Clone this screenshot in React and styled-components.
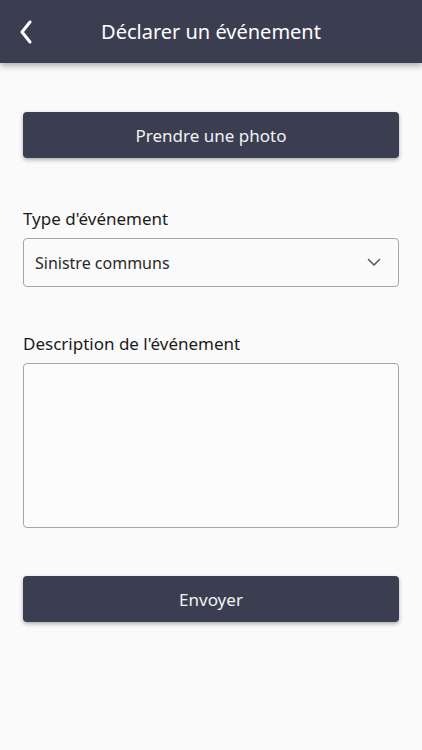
import styled, { createGlobalStyle } from "styled-components";

const GlobalStyle = createGlobalStyle`
  html, body {
    margin: 0;
    padding: 0;
    background: #fafafa;
  }
  body {
    font-family: "Noto Sans", "Open Sans", sans-serif;
    color: #222;
  }
`;

const Page = styled.div`
  width: 422px;
  min-height: 750px;
  background: #fafafa;
`;

const Header = styled.header`
  height: 63px;
  background: #3b3e51;
  display: flex;
  align-items: center;
  position: relative;
  box-shadow: 0 3px 6px rgba(0, 0, 0, 0.3);
`;

const BackButton = styled.button`
  position: absolute;
  left: 14px;
  top: 18px;
  width: 24px;
  height: 28px;
  border: none;
  background: none;
  padding: 0;
  display: flex;
  align-items: center;
  justify-content: center;
`;

const Title = styled.h1`
  margin: 0;
  flex: 1;
  text-align: center;
  color: #fff;
  font-size: 20px;
  font-weight: 400;
`;

const Form = styled.div`
  padding: 49px 23px 0;
  display: flex;
  flex-direction: column;
`;

const DarkButton = styled.button`
  width: 100%;
  height: 46px;
  border: none;
  border-radius: 4px;
  background: #3b3e51;
  color: #f2f2f2;
  font-family: inherit;
  font-size: 17px;
  box-shadow: 0 2px 4px rgba(0, 0, 0, 0.3);
  margin-top: ${(p) => p.$mt || 0}px;
`;

const Field = styled.div`
  display: flex;
  flex-direction: column;
  margin-top: ${(p) => p.$mt}px;
`;

const Label = styled.label`
  font-size: 17px;
  color: #1c1c1c;
  line-height: 22px;
  margin-bottom: 8px;
`;

const SelectBox = styled.div`
  height: 49px;
  box-sizing: border-box;
  border: 1px solid #a5a5a5;
  border-radius: 4px;
  display: flex;
  align-items: center;
  justify-content: space-between;
  padding: 0 17px 0 11px;
  font-size: 16px;
  color: #2a2a2a;
  background: #fafafa;
`;

const TextArea = styled.div`
  height: 165px;
  box-sizing: border-box;
  border: 1px solid #a5a5a5;
  border-radius: 4px;
  background: #fcfcfc;
`;

export default function App() {
  return (
    <Page>
      <GlobalStyle />
      <Header>
        <BackButton aria-label="Retour">
          <svg width="14" height="24" viewBox="0 0 14 24">
            <path d="M11 2 L3 12 L11 22" fill="none" stroke="#fff" strokeWidth="3" strokeLinecap="round" strokeLinejoin="round" />
          </svg>
        </BackButton>
        <Title>Déclarer un événement</Title>
      </Header>
      <Form>
        <DarkButton>Prendre une photo</DarkButton>
        <Field $mt={50}>
          <Label>Type d'événement</Label>
          <SelectBox>
            <span>Sinistre communs</span>
            <svg width="14" height="9" viewBox="0 0 14 9">
              <path d="M1.5 1.5 L7 7 L12.5 1.5" fill="none" stroke="#555" strokeWidth="1.5" strokeLinecap="round" strokeLinejoin="round" />
            </svg>
          </SelectBox>
        </Field>
        <Field $mt={46}>
          <Label>Description de l'événement</Label>
          <TextArea />
        </Field>
        <DarkButton $mt={48}>Envoyer</DarkButton>
      </Form>
    </Page>
  );
}
